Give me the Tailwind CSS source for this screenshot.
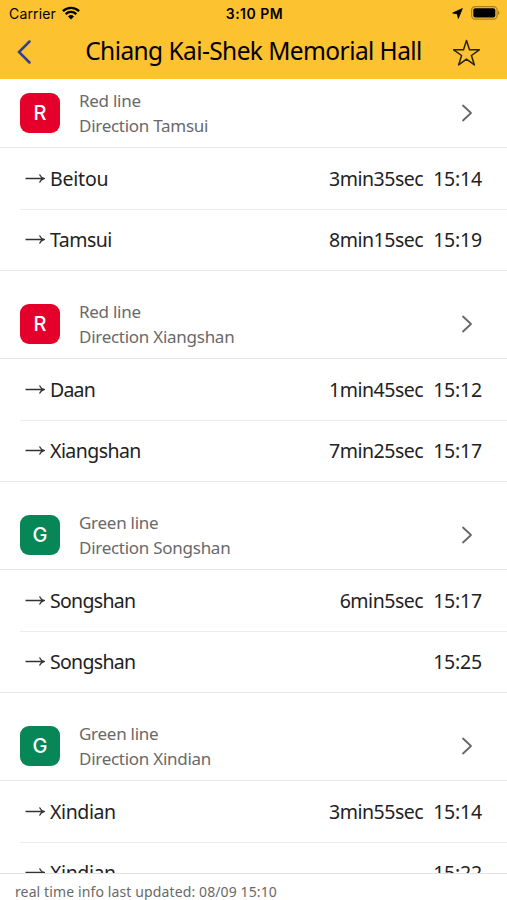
<!DOCTYPE html>
<html lang="en">
<head>
<meta charset="utf-8">
<title>Chiang Kai-Shek Memorial Hall</title>
<script src="https://cdn.jsdelivr.net/npm/@tailwindcss/browser@4"></script>
</head>
<body class="bg-white">
<div class="flex h-[900px] w-[507px] flex-col overflow-hidden bg-white font-['Noto_Sans',sans-serif] text-[#222]">
  <header class="h-[79px] shrink-0 bg-[#fcc22f] text-black">
    <div class="grid h-[27px] grid-cols-3 items-center pr-[7px] pl-[9px] font-['Inter',sans-serif] text-sm">
      <div class="flex items-center gap-[6px]">
        <span class="tracking-[0.15px]">Carrier</span>
        <svg class="-mt-0.5 h-[14px] w-[18px]" viewBox="0 0 18 14" fill="none" stroke="#000" stroke-width="2.3"><path d="M.9 5.1a11.8 11.8 0 0 1 16.2 0M3.700 8.100a7.600 7.600 0 0 1 10.600 0"/><path d="M9 13.500 6 10.500a4.300 4.300 0 0 1 6 0z" fill="#000" stroke="none"/></svg>
      </div>
      <div class="text-center text-[14px] font-semibold tracking-[0.5px]">3:10 PM</div>
      <div class="flex items-center justify-end gap-[7px]">
        <svg class="h-[11px] w-[11px]" viewBox="0 0 11 11"><path d="M10.300.6 6.300 10.400 5.400 5.900.7 5z" fill="#000" stroke="#000" stroke-width=".8" stroke-linejoin="round"/></svg>
        <svg class="-mt-px h-[14px] w-[30px]" viewBox="0 0 30 14"><rect x="1.6" y=".6" width="25.500" height="12.6" rx="3.6" fill="none" stroke="#a8811f" stroke-width="1.2"/><rect x="3.3" y="2.3" width="22" height="9.2" rx="2" fill="#000"/><path d="M28 4.800q3 2.100 0 4.300z" fill="#a8811f"/></svg>
      </div>
    </div>
    <div class="flex h-[50px] items-center justify-between pr-[26px] pl-[17px]">
      <svg class="h-[24px] w-[15px]" viewBox="0 0 15 24" fill="none" stroke="#33408f" stroke-width="2.5" stroke-linecap="round"><path d="M12.500 1.500 2 12l10.500 10.500"/></svg>
      <h1 class="-mt-px pl-[22px] text-[24.5px] leading-none tracking-[-0.58px]">Chiang Kai-Shek Memorial Hall</h1>
      <svg class="mt-px h-[28px] w-[28px]" viewBox="0 0 28 28" fill="none" stroke="#2c2208" stroke-width="1.5" stroke-linejoin="round"><path d="m13.500 1.500 3 9.300h9.800l-7.900 5.700 3 9.400-7.900-5.800-7.900 5.800 3-9.400-7.900-5.700h9.800z"/></svg>
    </div>
  </header>
  <main id="lines" class="min-h-0 flex-1 overflow-hidden"></main>
  <footer class="h-[27px] shrink-0 border-t border-[#e2e2e2] bg-white pt-[8px] pl-[15px] text-[14px] leading-[20px] tracking-[0.12px] text-[#696969]"><span>real time info last updated: 08/09 15:10</span></footer>
</div>
<script>
const sections = [
  ['Red line', 'Direction Tamsui', [['Beitou', '3min35sec', '15:14'], ['Tamsui', '8min15sec', '15:19']]],
  ['Red line', 'Direction Xiangshan', [['Daan', '1min45sec', '15:12'], ['Xiangshan', '7min25sec', '15:17']]],
  ['Green line', 'Direction Songshan', [['Songshan', '6min5sec', '15:17'], ['Songshan', '', '15:25']]],
  ['Green line', 'Direction Xindian', [['Xindian', '3min55sec', '15:14'], ['Xindian', '', '15:22']]],
];
const nameSpacing = { Beitou: 'tracking-[-0.2px]', Tamsui: 'tracking-[-0.5px]', Daan: 'tracking-[-0.8px]', Xiangshan: 'tracking-[-0.55px]', Songshan: 'tracking-[-0.7px]', Xindian: 'tracking-[-0.4px]' };
const row = ([name, wait, time], i) => `
  <li class="ml-5 ${i ? 'h-[60px]' : 'h-[62px] border-b border-[#ececec]'} flex items-center pr-[25px] pl-[5px] text-[19.5px] leading-none">
    <svg class="mr-[5px] h-[10px] w-[20px] shrink-0" viewBox="0 0 20 10" fill="none" stroke="#333" stroke-width="1.3"><path d="M.5 4.500h18.500M14.500.5Q16 3.700 19 4.500 16 5.300 14.500 8.500"/></svg>
    <span class="flex-1 ${nameSpacing[name]}">${name}</span>
    <span class="mr-[10px] tracking-[-0.48px]">${wait}</span>
    <span class="tracking-[-0.2px]">${time}</span>
  </li>`;
document.getElementById('lines').innerHTML = sections.map(([line, direction, rows], i) => `
  <section>
    <div class="${i ? 'h-[88px] pt-[19px]' : 'h-[69px]'} flex items-center border-b border-[#e6e6e6] pr-[34px] pl-5">
      <div class="${line[0] === 'R' ? 'bg-[#e4002b]' : 'bg-[#078758]'} mr-[19px] flex size-10 items-center justify-center rounded-[9px] font-['Inter',sans-serif] text-[20px] font-medium text-white">${line[0]}</div>
      <div class="flex-1 pt-px text-[17px] leading-[24.5px] tracking-[-0.27px] text-[#696969]"><p>${line}</p><p>${direction}</p></div>
      <svg class="h-[18px] w-[12px]" viewBox="0 0 12 18" fill="none" stroke="#666" stroke-width="1.8" stroke-linecap="round" stroke-linejoin="round"><path d="m2 1.500 8 7.500-8 7.500"/></svg>
    </div>
    <ul class="h-[123px] border-b border-[#e8e8e8]">${rows.map(row).join('')}</ul>
  </section>`).join('');
</script>
</body>
</html>
